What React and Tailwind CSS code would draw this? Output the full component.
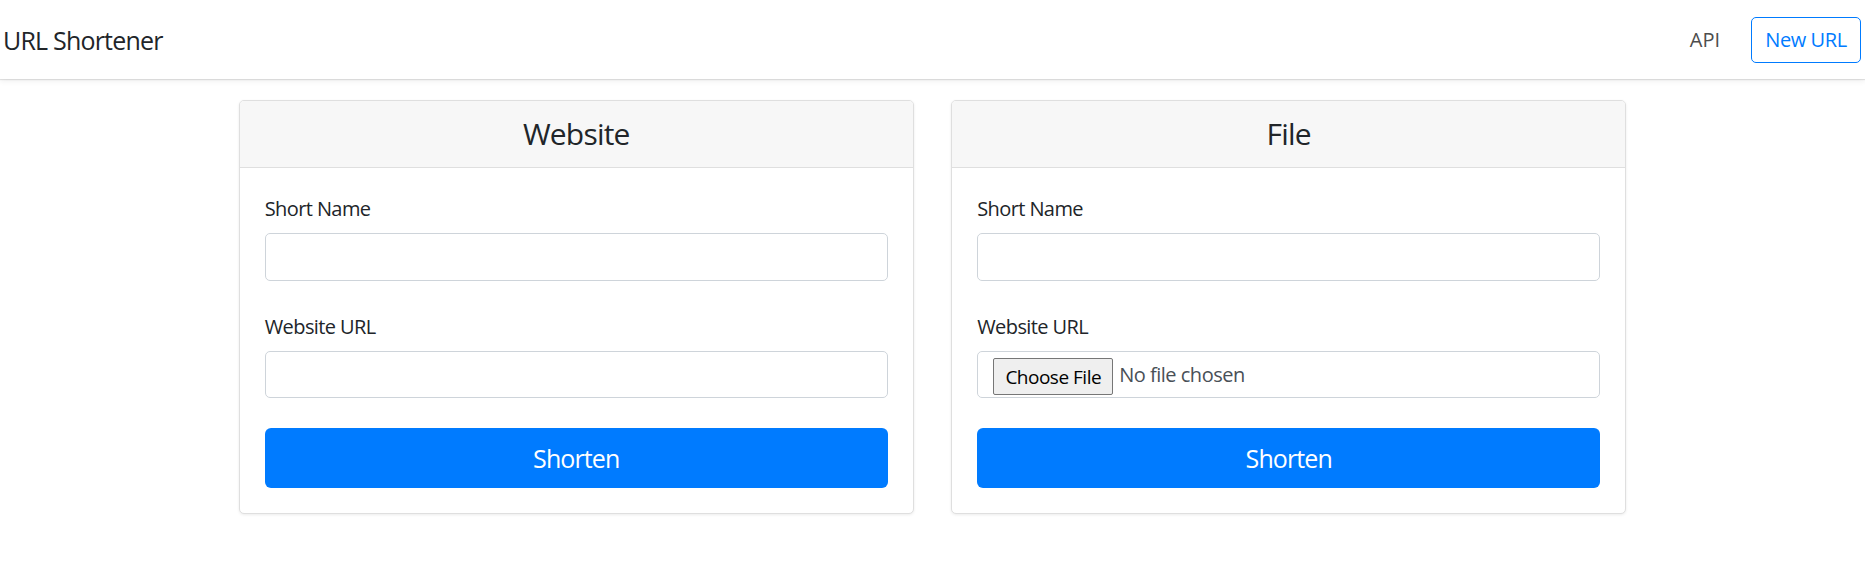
import React from 'react';

function Field({ label, children }) {
  return (
    <div className="mb-[30px]">
      <label className="block mb-[10px] pt-[1px] h-[30px] text-[20px] leading-[30px] tracking-[-0.6px] text-[#212529]">{label}</label>
      {children}
    </div>
  );
}

function TextInput() {
  return (
    <input
      type="text"
      className="block w-full h-[47.5px] px-[15px] border border-[#ced4da] rounded-[5px] bg-white text-[20px] text-[#495057] outline-none"
    />
  );
}

function FilePicker() {
  return (
    <div className="flex items-center w-full h-[47.5px] pl-[15px] border border-[#ced4da] rounded-[5px] bg-white">
      <span className="flex items-center justify-center mt-[5px] h-[37px] w-[120px] bg-[#efefef] border border-[#767676] rounded-[2px] text-[19px] tracking-[-0.5px] text-black">
        Choose File
      </span>
      <span className="ml-[6px] pt-[2px] text-[20px] tracking-[-0.5px] text-[#495057]">No file chosen</span>
    </div>
  );
}

function Card({ title, children }) {
  return (
    <div className="bg-white border border-[#dfdfdf] rounded-[5px] overflow-hidden shadow-[0_1px_3px_rgba(0,0,0,0.08)]">
      <div className="bg-[#f7f7f7] border-b border-[#dfdfdf] py-[15px] text-center text-[30px] leading-[36px] tracking-[-0.8px] text-[#212529]">
        {title}
      </div>
      <div className="p-[25px]">
        {children}
        <button className="block w-full h-[60px] bg-[#007bff] rounded-[6px] text-white text-[25px] leading-[30px] tracking-[-0.9px]">
          Shorten
        </button>
      </div>
    </div>
  );
}

export default function App() {
  return (
    <div className="min-h-screen bg-white font-['Open_Sans',sans-serif] text-[#212529]">
      <nav className="relative z-10 h-[79px] flex items-center justify-between pl-[3px] pr-[4px] bg-white shadow-[0_1px_1px_rgba(0,0,0,0.1),0_2px_6px_rgba(0,0,0,0.07)]">
        <span className="text-[25px] leading-[30px] tracking-[-0.8px] text-[#212529]">URL Shortener</span>
        <div className="flex items-center">
          <a className="text-[20px] leading-[30px] text-[#4d4d4d] mr-[31px]">API</a>
          <button className="h-[46px] w-[110px] border border-[#007bff] rounded-[5px] text-[#007bff] text-[20px] leading-[30px] tracking-[-0.4px]">
            New URL
          </button>
        </div>
      </nav>

      <main className="w-[1387.5px] mx-auto mt-[21px] grid grid-cols-2 gap-x-[37.5px]">
        <Card title="Website">
          <Field label="Short Name">
            <TextInput />
          </Field>
          <Field label="Website URL">
            <TextInput />
          </Field>
        </Card>
        <Card title="File">
          <Field label="Short Name">
            <TextInput />
          </Field>
          <Field label="Website URL">
            <FilePicker />
          </Field>
        </Card>
      </main>
    </div>
  );
}
